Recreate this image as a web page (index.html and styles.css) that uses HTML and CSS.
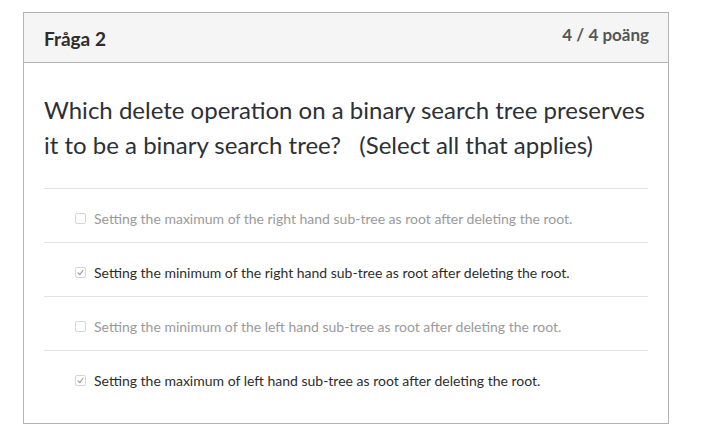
FILE: index.html
```html
<!DOCTYPE html>
<html lang="sv">
<head>
<meta charset="utf-8">
<link rel="stylesheet" href="styles.css">
</head>
<body>
<div class="card">
  <div class="card-header">
    <h2 class="title">Fråga 2</h2>
    <div class="points">4 / 4 poäng</div>
  </div>
  <div class="card-body">
    <p class="question">Which delete operation on a binary search tree preserves it to be a binary search tree?&nbsp;&nbsp; (Select all that applies)</p>
    <ul class="answers">
      <li class="answer">
        <span class="box"></span>
        <span class="label muted">Setting the maximum of the right hand sub-tree as root after deleting the root.</span>
      </li>
      <li class="answer">
        <span class="box checked"><svg viewBox="0 0 11 11" width="11" height="11"><path d="M3 5.8 L4.8 7.6 L8 3.2" fill="none" stroke="#9a9a9a" stroke-width="1.1" stroke-linecap="round" stroke-linejoin="round"/></svg></span>
        <span class="label">Setting the minimum of the right hand sub-tree as root after deleting the root.</span>
      </li>
      <li class="answer">
        <span class="box"></span>
        <span class="label muted">Setting the minimum of the left hand sub-tree as root after deleting the root.</span>
      </li>
      <li class="answer">
        <span class="box checked"><svg viewBox="0 0 11 11" width="11" height="11"><path d="M3 5.8 L4.8 7.6 L8 3.2" fill="none" stroke="#9a9a9a" stroke-width="1.1" stroke-linecap="round" stroke-linejoin="round"/></svg></span>
        <span class="label">Setting the maximum of left hand sub-tree as root after deleting the root.</span>
      </li>
    </ul>
  </div>
</div>
</body>
</html>
```
FILE: styles.css
```css
html, body {
  margin: 0;
  padding: 0;
  background: #ffffff;
}
body {
  font-family: Lato, "Open Sans", "Liberation Sans", sans-serif;
  color: #2d3b45;
  padding: 12px 0 0 23px;
}
.card {
  width: 644px;
  border: 1px solid #b3b3b3;
  background: #ffffff;
}
.card-header {
  height: 49px;
  box-sizing: border-box;
  background: #f5f5f5;
  border-bottom: 1px solid #b3b3b3;
  display: flex;
  justify-content: space-between;
  padding: 0 19px 0 20px;
  height: 50px;
}
.title {
  margin: 0;
  font-size: 19px;
  font-weight: 700;
  color: #2d2d2d;
  line-height: 20px;
  padding-top: 16px;
}
.points {
  font-size: 17px;
  font-weight: 700;
  color: #555555;
  line-height: 18px;
  padding-top: 13px;
}
.card-body {
  padding: 29px 20px 19px 20px;
}
.question {
  margin: 0 0 26px 0;
  font-size: 24px;
  line-height: 35px;
  color: #2d3035;
}
.answers {
  list-style: none;
  margin: 0;
  padding: 0;
}
.answer {
  border-top: 1px solid #e2e2e2;
  height: 54px;
  box-sizing: border-box;
  display: flex;
  align-items: center;
  padding-left: 31px;
  padding-top: 6px;
}
.box {
  width: 9px;
  height: 9px;
  border: 1px solid #d6d6d6;
  border-radius: 2px;
  margin-right: 8px;
  position: relative;
  flex: none;
}
.box svg {
  position: absolute;
  left: -1px;
  top: -1px;
}
.label {
  font-size: 14px;
  color: #2d2d2d;
}
.label.muted {
  color: #9a9a9a;
}
```
